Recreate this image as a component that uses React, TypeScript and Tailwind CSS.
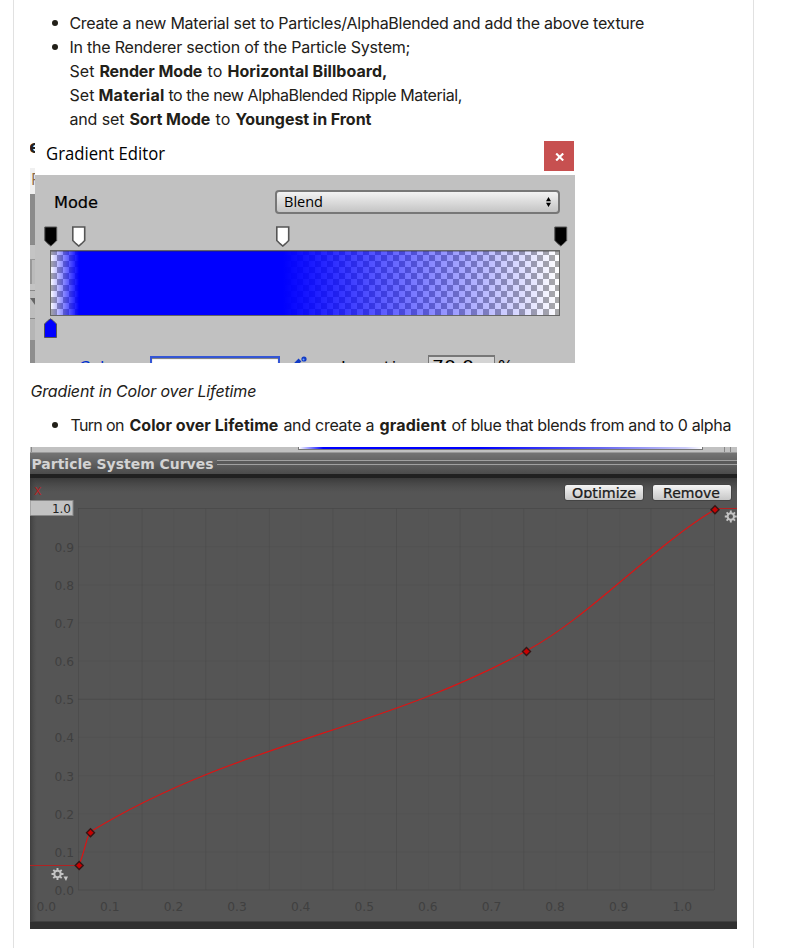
import React from "react";

const body = "font-['Inter','Liberation_Sans',sans-serif] text-[16px] leading-6 text-[#222018]";

function Run({ w, bold, children }: { w: number; bold?: boolean; children: string }) {
  return (
    <svg width={w} height="24" className="block shrink-0 overflow-visible">
      <text x="0.4" y="17.5" fill="#222018" fontSize="16" fontWeight={bold ? 700 : 400} textLength={w}>
        {children}
      </text>
    </svg>
  );
}

function Bullet() {
  return <span className="mr-[11px] ml-[22px] h-[6px] w-[6px] shrink-0 rounded-full bg-[#222018]" />;
}

function Key({ kind, className }: { kind: "black" | "white" | "blue"; className: string }) {
  const fill = kind === "black" ? "#000" : kind === "white" ? "#fff" : "#00f";
  return (
    <svg width="14" height="21" viewBox="0 0 14 21" className={"absolute " + className}>
      <path
        d={kind === "blue" ? "M.5 19.5V6L4 2.5L6.5 .8L9 2.5L12.5 6V19.5Z" : "M.8 1H12.7V14.5L9.5 17.7L6.8 20L4 17.7L.8 14.5Z"}
        fill={fill}
        stroke="#555"
        strokeWidth={kind === "white" ? 1.6 : 1}
      />
    </svg>
  );
}

function GradientEditor() {
  return (
    <div className="flex h-[225px] w-[545px] overflow-hidden">
      <div className="flex w-[5px] shrink-0 flex-col overflow-hidden">
        <svg width="5" height="30" className="block shrink-0 font-['DejaVu_Sans',sans-serif]">
          <text x="-1" y="15" fontSize="18" fontWeight="700" fill="#222">e</text>
        </svg>
        <svg width="5" height="26" className="block shrink-0 bg-[#f0f0f0] font-['Open_Sans',sans-serif]">
          <text x="1" y="17" fontSize="16" fill="#8a6848">F</text>
        </svg>
        <div className="h-[50px] shrink-0 bg-[#8b8b8b]" />
        <div className="flex h-[47px] shrink-0 flex-col border-y border-[#888] bg-[#c4c4c4]">
          <div className="mt-[14px] h-[25px] border-t border-l-2 border-[#999] bg-[#bbb]" />
        </div>
        <div className="h-[28px] shrink-0 border-b border-[#888] bg-[#bdbdbd]">
          <svg width="5" height="14" className="block"><path d="M0 7H9L5 14Z" fill="#666" /></svg>
        </div>
        <div className="h-[21px] shrink-0 bg-[#b5b5b5]" />
        <div className="h-[23px] shrink-0 bg-[#8e8e8e]" />
      </div>
      <div className="flex w-[540px] flex-col">
        <div className="flex h-[37px] shrink-0 items-start justify-between bg-white pr-px pl-[11px]">
          <svg width="119" height="32" className="block overflow-visible font-['Open_Sans','Noto_Sans',sans-serif]">
            <text x="0" y="22" fontSize="17.5" fill="#000" textLength="119" lengthAdjust="spacingAndGlyphs">Gradient Editor</text>
          </svg>
          <span className="mt-[3px] flex h-[30px] w-[30px] items-center justify-center bg-[#c75050]">
            <svg width="10" height="8" viewBox="0 0 10 8" className="mt-px ml-px">
              <path d="M1.2 .5L8.2 7.5M8.2 .5L1.2 7.5" stroke="#fff" strokeWidth="2.1" />
            </svg>
          </span>
        </div>
        <div className="flex h-[188px] shrink-0 flex-col overflow-hidden bg-[#c1c1c1]">
          <div className="flex h-[75px] shrink-0 justify-between pt-[15px] pr-[15px] pl-[19px]">
            <svg width="50" height="26" className="block font-['DejaVu_Sans',sans-serif]">
              <text x="0" y="18" fontSize="16" fill="#000" stroke="#000" strokeWidth=".2" textLength="44" lengthAdjust="spacingAndGlyphs">Mode</text>
            </svg>
            <div className="flex h-[24px] w-[285px] items-center justify-between rounded-[4px] border-2 border-[#777] bg-linear-to-b from-[#f3f3f3] to-[#c4c4c4] pr-[6px] pl-[7px]">
              <svg width="50" height="20" className="block font-['Open_Sans','Noto_Sans',sans-serif]">
                <text x="0" y="15" fontSize="14.5" fill="#000" textLength="39" lengthAdjust="spacingAndGlyphs">Blend</text>
              </svg>
              <svg width="7" height="12" viewBox="0 0 7 12"><path d="M3.5 1L6 5.2H1ZM3.5 11L1 6.8H6Z" /></svg>
            </div>
          </div>
          <div className="relative ml-[15px] h-[66px] w-[510px] shrink-0">
            <svg width="510" height="66" className="block">
              <defs>
                <pattern id="checks" width="12" height="12" patternUnits="userSpaceOnUse" x="1" y="-1">
                  <rect width="12" height="12" fill="#fff" />
                  <path d="M0 0H6V6H0ZM6 6H12V12H6Z" fill="#a9a9a9" />
                </pattern>
                <linearGradient id="alpha">
                  <stop offset="0" stopColor="#00f" stopOpacity="0" />
                  <stop offset=".057" stopColor="#00f" />
                  <stop offset=".457" stopColor="#00f" />
                  <stop offset="1" stopColor="#00f" stopOpacity="0" />
                </linearGradient>
              </defs>
              <rect width="510" height="66" fill="url(#checks)" />
              <rect width="510" height="66" fill="url(#alpha)" />
              <rect x=".5" y=".5" width="509" height="65" fill="none" stroke="#666" />
              <path d="M1 1.5H509" stroke="#333" strokeOpacity=".35" />
            </svg>
            <Key kind="black" className="top-[-24px] left-[-6px]" />
            <Key kind="white" className="top-[-24px] left-[22px]" />
            <Key kind="white" className="top-[-24px] left-[226px]" />
            <Key kind="black" className="top-[-24px] left-[504px]" />
            <Key kind="blue" className="top-[68px] left-[-6px]" />
          </div>
          <div className="flex h-[47px] shrink-0 pt-[40px] font-['DejaVu_Sans',sans-serif]">
            <svg width="115" height="7" className="shrink-0"><text x="44" y="16.5" fontSize="16" fill="#0030d0">Color</text></svg>
            <div className="h-[20px] w-[130px] shrink-0 border-2 border-[#3456d5] bg-white shadow-[inset_0_1px_1px_#777]" />
            <svg width="148" height="7" className="shrink-0">
              <path d="M15 9L20 4" stroke="#123bc5" strokeWidth="4" />
              <circle cx="24" cy="3" r="2.6" fill="#123bc5" />
              <circle cx="23.5" cy="3.5" r="1" fill="#6fa0ff" />
              <text x="61" y="16.5" fontSize="16" textLength="78">Location</text>
            </svg>
            <div className="-mt-px h-[20px] w-[67px] shrink-0 border border-t-2 border-[#777] bg-[#d4d4d4]">
              <svg width="64" height="6" className="block">
                <text x="3" y="14.5" fontSize="16" textLength="42" lengthAdjust="spacingAndGlyphs">70.0</text>
              </svg>
            </div>
            <svg width="40" height="7"><text x="3" y="16" fontSize="16">%</text></svg>
          </div>
        </div>
      </div>
    </div>
  );
}

const tenths = [0, 1, 2, 3, 4, 5, 6, 7, 8, 9, 10];

function Gear({ x, y }: { x: number; y: number }) {
  return (
    <g transform={`translate(${x} ${y})`} stroke="#c4c4c4" fill="none">
      <circle r="3.2" strokeWidth="2" />
      <path d="M0-6V-3M0 3V6M-6 0H-3M3 0H6M-4.2-4.2L-2.2-2.2M4.2 4.2L2.2 2.2M-4.2 4.2L-2.2 2.2M4.2-4.2L2.2-2.2" strokeWidth="1.9" />
    </g>
  );
}

function CurveButton({ children, w }: { children: string; w: number }) {
  return (
    <span className="flex h-[17px] w-[80px] justify-center overflow-hidden rounded-[3px] border border-[#444] bg-linear-to-b from-[#f4f4f4] to-[#c7c7c7]">
      <svg width={w} height="13" className="block overflow-hidden">
        <text x="0" y="12.5" fontSize="13.5" fill="#1c1c1c" stroke="#1c1c1c" strokeWidth=".25" textLength={w - 1} lengthAdjust="spacingAndGlyphs">{children}</text>
      </svg>
    </span>
  );
}

function Curves() {
  return (
    <div className="flex h-[482px] w-[707px] flex-col overflow-hidden font-['DejaVu_Sans',sans-serif]">
      <div className="flex h-[6px] shrink-0 border-b border-[#999] bg-[#c1c1c1]">
        <div className="ml-px w-[267px] border-l border-[#888]" />
        <div className="h-[3px] w-[405px] border-r border-b border-l border-[#777]">
          <div className="h-[2px] bg-[linear-gradient(90deg,#fff_0%,#00f_6%,#00f_45%,#6666f0_75%,#ccccf8_96%,#fff)]" />
        </div>
        <div className="ml-[21px] w-[7px] border-x border-[#888]" />
      </div>
      <div className="flex h-[21px] shrink-0 items-center bg-linear-to-b from-[#747474] to-[#4b4b4b] pl-[1px]">
        <svg width="186" height="21" className="block shrink-0">
          <text x="0.5" y="15.5" fontSize="13.5" fontWeight="700" fill="#d3d3d3" textLength="182" lengthAdjust="spacingAndGlyphs">Particle System Curves</text>
        </svg>
        <div className="mb-[2px] h-[5px] flex-1 border-y border-[#a0a0a0] bg-[#5a5a5a]" />
      </div>
      <div className="h-[4px] shrink-0 bg-[#202020]" />
      <div className="relative h-[443px] shrink-0 bg-[#555]">
        <svg width="707" height="443" viewBox="30 478 707 443" className="block">
          <defs>
            <linearGradient id="top" x2="0" y2="1"><stop stopColor="#2c2c2c" stopOpacity=".65" /><stop offset="1" stopColor="#444" stopOpacity="0" /></linearGradient>
            <linearGradient id="left"><stop stopColor="#333" stopOpacity=".65" /><stop offset="1" stopColor="#444" stopOpacity="0" /></linearGradient>
          </defs>
          <rect x="30" y="478" width="707" height="15" fill="url(#top)" />
          <rect x="30" y="478" width="7" height="443" fill="url(#left)" />
          {tenths.map((n) => (
            <g key={n} stroke="#474747">
              <path d={`M${78.5 + n * 63.6} 508V890`} strokeOpacity={n === 5 || n === 0 || n === 10 ? 0.6 : 0.42} />
              {n < 10 && <path d={`M${110 + n * 63.7} 508V890`} strokeOpacity=".12" />}
              <path d={`M78 ${890 - n * 38.15}H714`} strokeOpacity={n % 5 === 0 ? 0.65 : 0.22} />
            </g>
          ))}
          <g fill="#404040" fontSize="12">
            {tenths.map((n) => (
              <g key={n}>
                {n < 10 && <text x="54.5" y={895 - n * 38.15} textLength="19.5" lengthAdjust="spacingAndGlyphs">{`0.${n}`}</text>}
                <text x={36.5 + n * 63.6} y="910.5" textLength="19.5" lengthAdjust="spacingAndGlyphs">{n === 10 ? "1.0" : `0.${n}`}</text>
              </g>
            ))}
          </g>
          <text x="34" y="495" fontSize="11" fill="#b71f1f">X</text>
          <rect x="30" y="500.5" width="43" height="15" fill="#c2c2c2" stroke="#888" />
          <text x="52" y="512.5" fontSize="12" fill="#222" textLength="19">1.0</text>
          <path d="M30 865.5H79M714 508.5H737" stroke="#b02222" strokeWidth="1" fill="none" />
          <path d="M79 865C84 854 87 836 90 832C235 743 381 731 526 651C589 617.5 651 548 714 510" stroke="#dc1414" strokeWidth="1.2" fill="none" />
          {[[79.2, 865.5], [90.5, 832.7], [526.5, 651.5], [715, 509.7]].map(([x, y]) => (
            <path key={x} d={`M${x} ${y - 4}L${x + 4} ${y}L${x} ${y + 4}L${x - 4} ${y}Z`} fill="#c80000" stroke="#351515" strokeWidth="1.4" />
          ))}
          <Gear x={57.5} y={874} />
          <path d="M63.5 876.5H68L66 881Z" fill="#c8c8c8" />
          <Gear x={730.8} y={516.5} />
        </svg>
        <div className="absolute top-[6px] right-[5px] flex gap-[8px]">
          <CurveButton w={65}>Optimize</CurveButton>
          <CurveButton w={58}>Remove</CurveButton>
        </div>
      </div>
      <div className="h-[8px] shrink-0 border-t border-[#414141] bg-[#303030]" />
    </div>
  );
}

export default function App() {
  return (
    <div className="h-[948px] w-[809px] overflow-hidden bg-white">
      <main className={"ml-[13px] flex h-[948px] w-[741px] flex-col border-x border-[#e1e1e1] pl-4 " + body}>
        <ul className="flex h-[127px] shrink-0 flex-col pt-[11px]">
          <li className="flex items-center"><Bullet /><Run w={575}>Create a new Material set to Particles/AlphaBlended and add the above texture</Run></li>
          <li className="flex items-center"><Bullet /><Run w={341}>In the Renderer section of the Particle System;</Run></li>
          <li className="flex gap-[5px] pl-[39px]"><Run w={25}>Set</Run><Run w={103} bold>Render Mode</Run><Run w={15}>to</Run><Run w={160} bold>Horizontal Billboard,</Run></li>
          <li className="flex gap-[4px] pl-[39px]"><Run w={25}>Set</Run><Run w={66} bold>Material</Run><Run w={294}>to the new AlphaBlended Ripple Material,</Run></li>
          <li className="flex gap-[5px] pl-[39px]"><Run w={55}>and set</Run><Run w={81} bold>Sort Mode</Run><Run w={15}>to</Run><Run w={136} bold>Youngest in Front</Run></li>
        </ul>
        <div className="mt-[11px] shrink-0"><GradientEditor /></div>
        <p className="mt-4 shrink-0 italic"><Run w={226}>Gradient in Color over Lifetime</Run></p>
        <ul className="mt-[10px] shrink-0">
          <li className="flex items-center gap-[5px]">
            <span className="flex items-center"><Bullet /><span className="ml-px"><Run w={54}>Turn on</Run></span></span>
            <Run w={149} bold>Color over Lifetime</Run><Run w={91}>and create a</Run><Run w={67} bold>gradient</Run><Run w={280}>of blue that blends from and to 0 alpha</Run>
          </li>
        </ul>
        <div className="mt-[10px] shrink-0"><Curves /></div>
      </main>
    </div>
  );
}
